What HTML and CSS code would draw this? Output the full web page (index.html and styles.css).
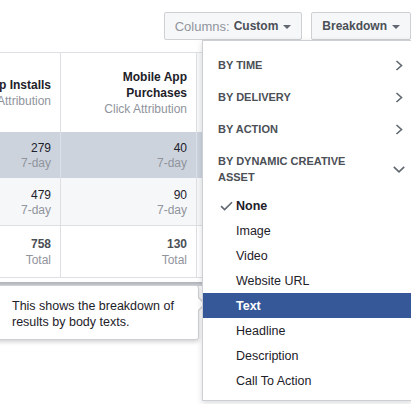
FILE: index.html
```html
<!DOCTYPE html>
<html>
<head>
<meta charset="utf-8">
<link rel="stylesheet" href="styles.css">
</head>
<body>
<div class="page">
  <div class="toolbar">
    <button class="btn"><span class="btn-label">Columns:</span><span class="btn-value">Custom</span><span class="caret"></span></button>
    <button class="btn"><span class="btn-value">Breakdown</span><span class="caret"></span></button>
  </div>

  <div class="table-wrap">
    <div class="table">
      <div class="row head">
        <div class="cell c1"><div class="title">Mobile App Installs</div><div class="sub">Click Attribution</div></div>
        <div class="cell c2"><div class="title">Mobile App Purchases</div><div class="sub">Click Attribution</div></div>
        <div class="cell c3"></div>
      </div>
      <div class="row r1">
        <div class="cell c1"><div class="num">279</div><div class="sub">7-day</div></div>
        <div class="cell c2"><div class="num">40</div><div class="sub">7-day</div></div>
        <div class="cell c3"></div>
      </div>
      <div class="row r2">
        <div class="cell c1"><div class="num">479</div><div class="sub">7-day</div></div>
        <div class="cell c2"><div class="num">90</div><div class="sub">7-day</div></div>
        <div class="cell c3"></div>
      </div>
      <div class="row total">
        <div class="cell c1"><div class="num">758</div><div class="sub">Total</div></div>
        <div class="cell c2"><div class="num">130</div><div class="sub">Total</div></div>
        <div class="cell c3"></div>
      </div>
    </div>
  </div>
  <div class="hscroll"></div>

  <div class="tooltip">This shows the breakdown of results by body texts.</div>

  <div class="menu">
    <div class="section"><span class="section-title">BY TIME</span><svg class="chev" width="12" height="11" viewBox="0 0 12 11"><path d="M3.5 1 L8.5 5.5 L3.5 10" fill="none" stroke="#606770" stroke-width="1.6"/></svg></div>
    <div class="section"><span class="section-title">BY DELIVERY</span><svg class="chev" width="12" height="11" viewBox="0 0 12 11"><path d="M3.5 1 L8.5 5.5 L3.5 10" fill="none" stroke="#606770" stroke-width="1.6"/></svg></div>
    <div class="section"><span class="section-title">BY ACTION</span><svg class="chev" width="12" height="11" viewBox="0 0 12 11"><path d="M3.5 1 L8.5 5.5 L3.5 10" fill="none" stroke="#606770" stroke-width="1.6"/></svg></div>
    <div class="section tall"><span class="section-title">BY DYNAMIC CREATIVE ASSET</span><svg class="chev" width="12" height="7" viewBox="0 0 12 7"><path d="M0.8 0.8 L6 5.8 L11.2 0.8" fill="none" stroke="#606770" stroke-width="1.6"/></svg></div>
    <div class="item checked"><span class="slot"><svg width="13" height="10" viewBox="0 0 13 10"><path d="M1 5.2 L4.6 8.6 L12 1.2" fill="none" stroke="#606770" stroke-width="1.6"/></svg></span>None</div>
    <div class="item"><span class="slot"></span>Image</div>
    <div class="item"><span class="slot"></span>Video</div>
    <div class="item"><span class="slot"></span>Website URL</div>
    <div class="item selected"><span class="slot"></span>Text</div>
    <div class="item"><span class="slot"></span>Headline</div>
    <div class="item"><span class="slot"></span>Description</div>
    <div class="item"><span class="slot"></span>Call To Action</div>
  </div>
</div>
</body>
</html>
```

FILE: styles.css
```css
html, body {
  margin: 0;
  padding: 0;
  background: #fff;
}
body {
  font-family: "Liberation Sans", Arial, Helvetica, sans-serif;
  color: #1d2129;
}
.page {
  position: relative;
  width: 411px;
  height: 404px;
  overflow: hidden;
}

/* toolbar */
.toolbar {
  display: flex;
  justify-content: flex-end;
  gap: 9px;
  padding: 12px 0 0 0;
}
.btn {
  height: 28px;
  box-sizing: border-box;
  border: 1px solid #ced0d4;
  border-radius: 2px;
  background: #f6f7f9;
  display: flex;
  align-items: center;
  padding: 0 10px;
  font-family: "Liberation Sans", Arial, sans-serif;
  font-size: 12px;
  font-weight: bold;
  color: #4b4f56;
}
.btn-label {
  font-weight: normal;
  color: #90949c;
  font-size: 13px;
  margin-right: 4px;
}
.caret {
  width: 0;
  height: 0;
  border-left: 4px solid transparent;
  border-right: 4px solid transparent;
  border-top: 4px solid #606770;
  margin-left: 5px;
  margin-top: 1px;
}

/* table */
.table-wrap {
  overflow: hidden;
  margin-top: 12px;
}
.table {
  margin-left: -76px;
  width: 500px;
  border-top: 1px solid #dddfe2;
  border-bottom: 1px solid #dddfe2;
}
.row {
  display: flex;
}
.cell {
  box-sizing: border-box;
  border-right: 1px solid #dddfe2;
  display: flex;
  flex-direction: column;
  justify-content: center;
  align-items: flex-end;
  text-align: right;
  padding: 0 9px;
  font-size: 12px;
  line-height: 16px;
}
.c1 { width: 137px; }
.c2 { width: 136px; }
.c3 { flex: 1; }
.head { height: 79px; }
.head .c3 { background: #f7f8f9; }
.r1 { height: 46px; background: #ccd3dd; }
.r1 .cell, .r2 .cell { padding-top: 2px; line-height: 15px; }
.r1 .cell { border-right-color: #dde1e7; }
.r2 { height: 47px; background: #f6f7f9; }
.total { height: 51px; border-top: 1px solid #dddfe2; background: #fff; }
.title {
  font-weight: bold;
  color: #1d2129;
}
.sub {
  color: #90949c;
}
.num {
  color: #1d2129;
}
.total .num {
  font-weight: bold;
  color: #4b4f56;
}
.hscroll {
  margin-top: 4px;
  height: 4px;
  background: linear-gradient(#aeb2b8, #d0d3d7);
}

/* tooltip */
.tooltip {
  position: absolute;
  left: -5px;
  top: 285px;
  width: 204px;
  box-sizing: border-box;
  height: 55px;
  padding: 12px 8px 0 16px;
  background: #fff;
  border: 1px solid #ccd0d5;
  border-radius: 3px;
  box-shadow: 0 2px 4px rgba(0, 0, 0, 0.18);
  font-size: 12.5px;
  line-height: 16px;
  color: #1d2129;
}
.tooltip::before,
.tooltip::after {
  content: "";
  position: absolute;
  top: 11px;
  width: 0;
  height: 0;
  border-top: 7px solid transparent;
  border-bottom: 7px solid transparent;
}
.tooltip::before {
  right: -8px;
  border-left: 7px solid #ccd0d5;
}
.tooltip::after {
  right: -6px;
  border-left: 6px solid #fff;
  top: 12px;
  border-top-width: 6px;
  border-bottom-width: 6px;
}

/* menu */
.menu {
  position: absolute;
  left: 202px;
  top: 40px;
  width: 210px;
  height: 361px;
  box-sizing: border-box;
  padding-top: 8px;
  background: #fff;
  border: 1px solid #ccd0d5;
  box-shadow: 0 2px 6px rgba(0, 0, 0, 0.15);
}
.section {
  height: 32px;
  display: flex;
  align-items: center;
  justify-content: space-between;
  padding: 0 6px 0 15px;
  font-size: 11px;
  font-weight: bold;
  line-height: 16px;
  color: #4b4f56;
}
.section.tall { height: 48px; }
.section-title { max-width: 150px; }
.chev { display: block; }
.item {
  height: 25px;
  display: flex;
  align-items: center;
  padding-left: 16px;
  font-size: 12.5px;
  color: #1d2129;
}
.slot {
  width: 17px;
  display: flex;
  align-items: center;
}
.slot svg { display: block; margin-left: 1px; }
.checked { font-weight: bold; }
.selected {
  background: #365899;
  color: #fff;
  font-weight: bold;
}
```
